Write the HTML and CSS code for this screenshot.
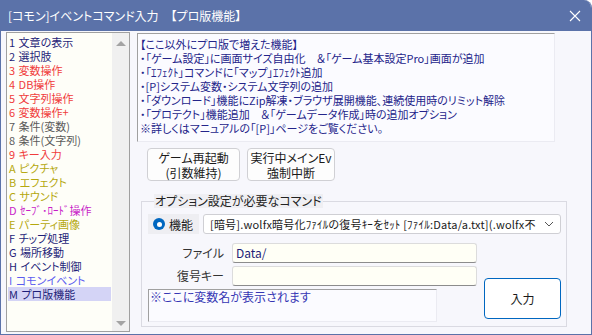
FILE: index.html
```html
<!DOCTYPE html>
<html lang="ja">
<head>
    <meta charset="UTF-8">
    <meta name="viewport" content="width=device-width, initial-scale=1.0">
    <title>[コモン]イベントコマンド入力</title>
    <link rel="stylesheet" href="styles.css">
</head>
<body>
    <div class="window">
        <div class="titlebar">
            <span class="title">[コモン]イベントコマンド入力　【プロ版機能】</span>
            <button class="close" aria-label="閉じる">
                <svg width="12" height="12" viewBox="0 0 12 12">
                    <path d="M1 1 L11 11 M11 1 L1 11" stroke="#fff" stroke-width="1.1" fill="none"/>
                </svg>
            </button>
        </div>

        <div class="body">
            <!-- command category list -->
            <div class="cmd-list">
                <ul class="cmd-items">
                    <li class="c-navy">1 文章の表示</li>
                    <li class="c-navy">2 選択肢</li>
                    <li class="c-red">3 変数操作</li>
                    <li class="c-red">4 DB操作</li>
                    <li class="c-red">5 文字列操作</li>
                    <li class="c-red">6 変数操作+</li>
                    <li class="c-gray">7 条件(変数)</li>
                    <li class="c-gray">8 条件(文字列)</li>
                    <li class="c-red">9 キー入力</li>
                    <li class="c-olive">A ピクチャ</li>
                    <li class="c-olive">B エフェクト</li>
                    <li class="c-olive">C サウンド</li>
                    <li class="c-magenta">D ｾｰﾌﾞ･ﾛｰﾄﾞ操作</li>
                    <li class="c-olive">E パーティ画像</li>
                    <li class="c-navy">F チップ処理</li>
                    <li class="c-navy">G 場所移動</li>
                    <li class="c-navy">H イベント制御</li>
                    <li class="c-blue">I コモンイベント</li>
                    <li class="c-navy selected">M プロ版機能</li>
                </ul>
                <div class="scrollbar">
                    <span class="arrow up"></span>
                    <span class="arrow down"></span>
                </div>
            </div>

            <div class="main">
                <div class="info">
                    <p>【ここ以外にプロ版で増えた機能】</p>
                    <p>・「ゲーム設定」に画面サイズ自由化　＆「ゲーム基本設定Pro」画面が追加</p>
                    <p>・「ｴﾌｪｸﾄ」コマンドに「マップ」ｴﾌｪｸﾄ追加</p>
                    <p>・[P]システム変数・システム文字列の追加</p>
                    <p>・「ダウンロード」機能にZip解凍・ブラウザ展開機能、連続使用時のリミット解除</p>
                    <p>・「プロテクト」機能追加　＆「ゲームデータ作成」時の追加オプション</p>
                    <p>※詳しくはマニュアルの「[P]」ページをご覧ください。</p>
                </div>

                <div class="actions">
                    <button class="btn btn-restart">ゲーム再起動<br>(引数維持)</button>
                    <button class="btn btn-stop">実行中メインEv<br>強制中断</button>
                </div>

                <fieldset class="options">
                    <legend>オプション設定が必要なコマンド</legend>
                    <div class="row">
                        <label class="radio"><span class="radio-dot"></span>機能</label>
                        <div class="select">
                            <span class="select-text">[暗号].wolfx暗号化ﾌｧｲﾙの復号ｷｰをｾｯﾄ [ﾌｧｲﾙ:Data/a.txt](.wolfx不</span>
                            <svg class="chevron" width="10" height="6" viewBox="0 0 10 6">
                                <path d="M1 1 L5 5 L9 1" stroke="#555" stroke-width="1" fill="none"/>
                            </svg>
                        </div>
                    </div>
                    <div class="lower">
                        <div class="fields">
                            <div class="field">
                                <span class="field-label">ファイル</span>
                                <div class="input">Data/</div>
                            </div>
                            <div class="field">
                                <span class="field-label">復号キー</span>
                                <div class="input"></div>
                            </div>
                            <div class="memo">※ここに変数名が表示されます</div>
                        </div>
                        <button class="btn btn-enter">入力</button>
                    </div>
                </fieldset>
            </div>
        </div>
    </div>
</body>
</html>
```

FILE: styles.css
```css
/* Colors */
:root {
    --title-bg: #5b72a9;
    --window-bg: #f7f7fc;
    --box-bg: #fbfbff;
    --list-bg: #fefef8;
    --input-bg: #fffff6;
    --text-navy: #1e1e78;
    --border-gray: #a0a0a0;
    --accent: #0067c0;
}

* {
    margin: 0;
    padding: 0;
    box-sizing: border-box;
}

body {
    background: #fff;
    font-family: "Noto Sans CJK JP", "Noto Sans", sans-serif;
    font-size: 11px;
    font-feature-settings: "palt";
    color: #1a1a1a;
}

.window {
    width: 592px;
    height: 335px;
    background: var(--window-bg);
    border: 1px solid var(--title-bg);
    border-top: none;
    border-top-right-radius: 8px;
    overflow: hidden;
}

/* Title bar */
.titlebar {
    height: 31px;
    background: var(--title-bg);
    display: flex;
    align-items: center;
    justify-content: space-between;
    padding: 0 10px 0 8px;
    margin: 0 -1px;
}

.title {
    color: #fff;
    font-size: 12px;
    line-height: 16px;
}

.close {
    background: none;
    border: none;
    width: 14px;
    height: 14px;
    display: flex;
    align-items: center;
    justify-content: center;
}

/* Body */
.body {
    display: flex;
    height: 303px;
    padding: 1px 0 0 5px;
}

.cmd-list {
    width: 124px;
    height: 300px;
    border: 1px solid var(--border-gray);
    display: flex;
    background: var(--list-bg);
}

.cmd-items {
    flex: 1;
    list-style: none;
    padding: 2px 1px 0 1px;
}

.cmd-items li {
    line-height: 14px;
    height: 14px;
    padding-left: 1px;
    white-space: nowrap;
    word-spacing: 1px;
}

.cmd-items li.selected {
    background: #d4d4f6;
}

.c-navy { color: var(--text-navy); }
.c-red { color: #f03c3c; }
.c-gray { color: #5a5a5a; }
.c-olive { color: #b5a80e; }
.c-magenta { color: #c81ec8; }
.c-blue { color: #5c5cf0; }

.scrollbar {
    width: 17px;
    background: #f0f0f0;
    display: flex;
    flex-direction: column;
    justify-content: space-between;
    align-items: center;
    padding: 8px 0 5px;
}

.arrow {
    width: 0;
    height: 0;
    border-left: 5px solid transparent;
    border-right: 5px solid transparent;
}

.arrow.up {
    border-bottom: 5px solid #a3a3a3;
}

.arrow.down {
    border-top: 5px solid #a3a3a3;
}

/* Right side */
.main {
    margin-left: 7px;
    width: 432px;
}

.info {
    width: 418px;
    height: 109px;
    margin-top: 1px;
    background: var(--box-bg);
    border: 1px solid #ebebf2;
    border-top-color: var(--border-gray);
    border-left-color: var(--border-gray);
    padding: 3px 2px;
    color: #24248a;
    line-height: 14px;
    white-space: nowrap;
    overflow: hidden;
}

.actions {
    display: flex;
    gap: 7px;
    margin-top: 6px;
    padding-left: 10px;
}

.btn {
    font-family: inherit;
    font-feature-settings: "palt";
    font-size: 12px;
    line-height: 15px;
    color: #1a1a1a;
    background: #fdfdfd;
    border: 1px solid #d0d0d4;
    border-radius: 4px;
}

.btn-restart {
    width: 93px;
    height: 33px;
}

.btn-stop {
    width: 88px;
    height: 33px;
}

/* Option group */
.options {
    margin: 13px 0 0 4px;
    width: 426px;
    height: 133px;
    border: 1px solid #dadae2;
    padding: 0 5px 3px 6px;
}

.options legend {
    margin-left: 6px;
    padding: 0 1px;
    background: #efeff3;
    font-size: 12px;
    line-height: 14px;
    color: #222;
}

.row {
    display: flex;
    gap: 4px;
    margin-top: 6px;
    height: 20px;
}

.radio {
    width: 51px;
    background: #eeeef2;
    display: flex;
    align-items: center;
    gap: 4px;
    padding-left: 5px;
    font-size: 12px;
    color: #1a1a1a;
}

.radio-dot {
    width: 12px;
    height: 12px;
    border-radius: 50%;
    background: var(--accent);
    display: flex;
    align-items: center;
    justify-content: center;
}

.radio-dot::after {
    content: "";
    width: 5px;
    height: 5px;
    border-radius: 50%;
    background: #fff;
}

.select {
    width: 358px;
    background: #fff;
    border: 1px solid #cfcfd4;
    border-radius: 3px;
    display: flex;
    align-items: center;
    padding: 0 6px;
    gap: 6px;
    overflow: hidden;
}

.select-text {
    flex: 1;
    min-width: 0;
    font-size: 11px;
    letter-spacing: 0.2px;
    white-space: nowrap;
    overflow: hidden;
    color: #1a1a1a;
}

.chevron {
    flex: none;
}

.lower {
    display: flex;
    margin-top: 9px;
}

.fields {
    width: 329px;
}

.field {
    display: flex;
    height: 20px;
    margin-bottom: 3px;
}

.field-label {
    width: 76px;
    margin-right: 8px;
    text-align: right;
    font-size: 12px;
    line-height: 20px;
    color: #333;
}

.input {
    width: 245px;
    background: var(--input-bg);
    border: 1px solid #dcdcdc;
    border-bottom-color: #8c8c8c;
    border-radius: 3px;
    padding-left: 3px;
    font-size: 12px;
    line-height: 18px;
    color: var(--text-navy);
}

.memo {
    width: 289px;
    height: 33px;
    margin-top: 1px;
    background: var(--box-bg);
    border: 1px solid #ebebf2;
    border-top-color: var(--border-gray);
    border-left-color: var(--border-gray);
    padding-left: 1px;
    line-height: 14px;
    font-size: 12px;
    color: #3636b4;
}

.btn-enter {
    width: 77px;
    height: 41px;
    margin: 35px 0 0 7px;
    background: #fff;
    border-color: var(--accent);
}
```
